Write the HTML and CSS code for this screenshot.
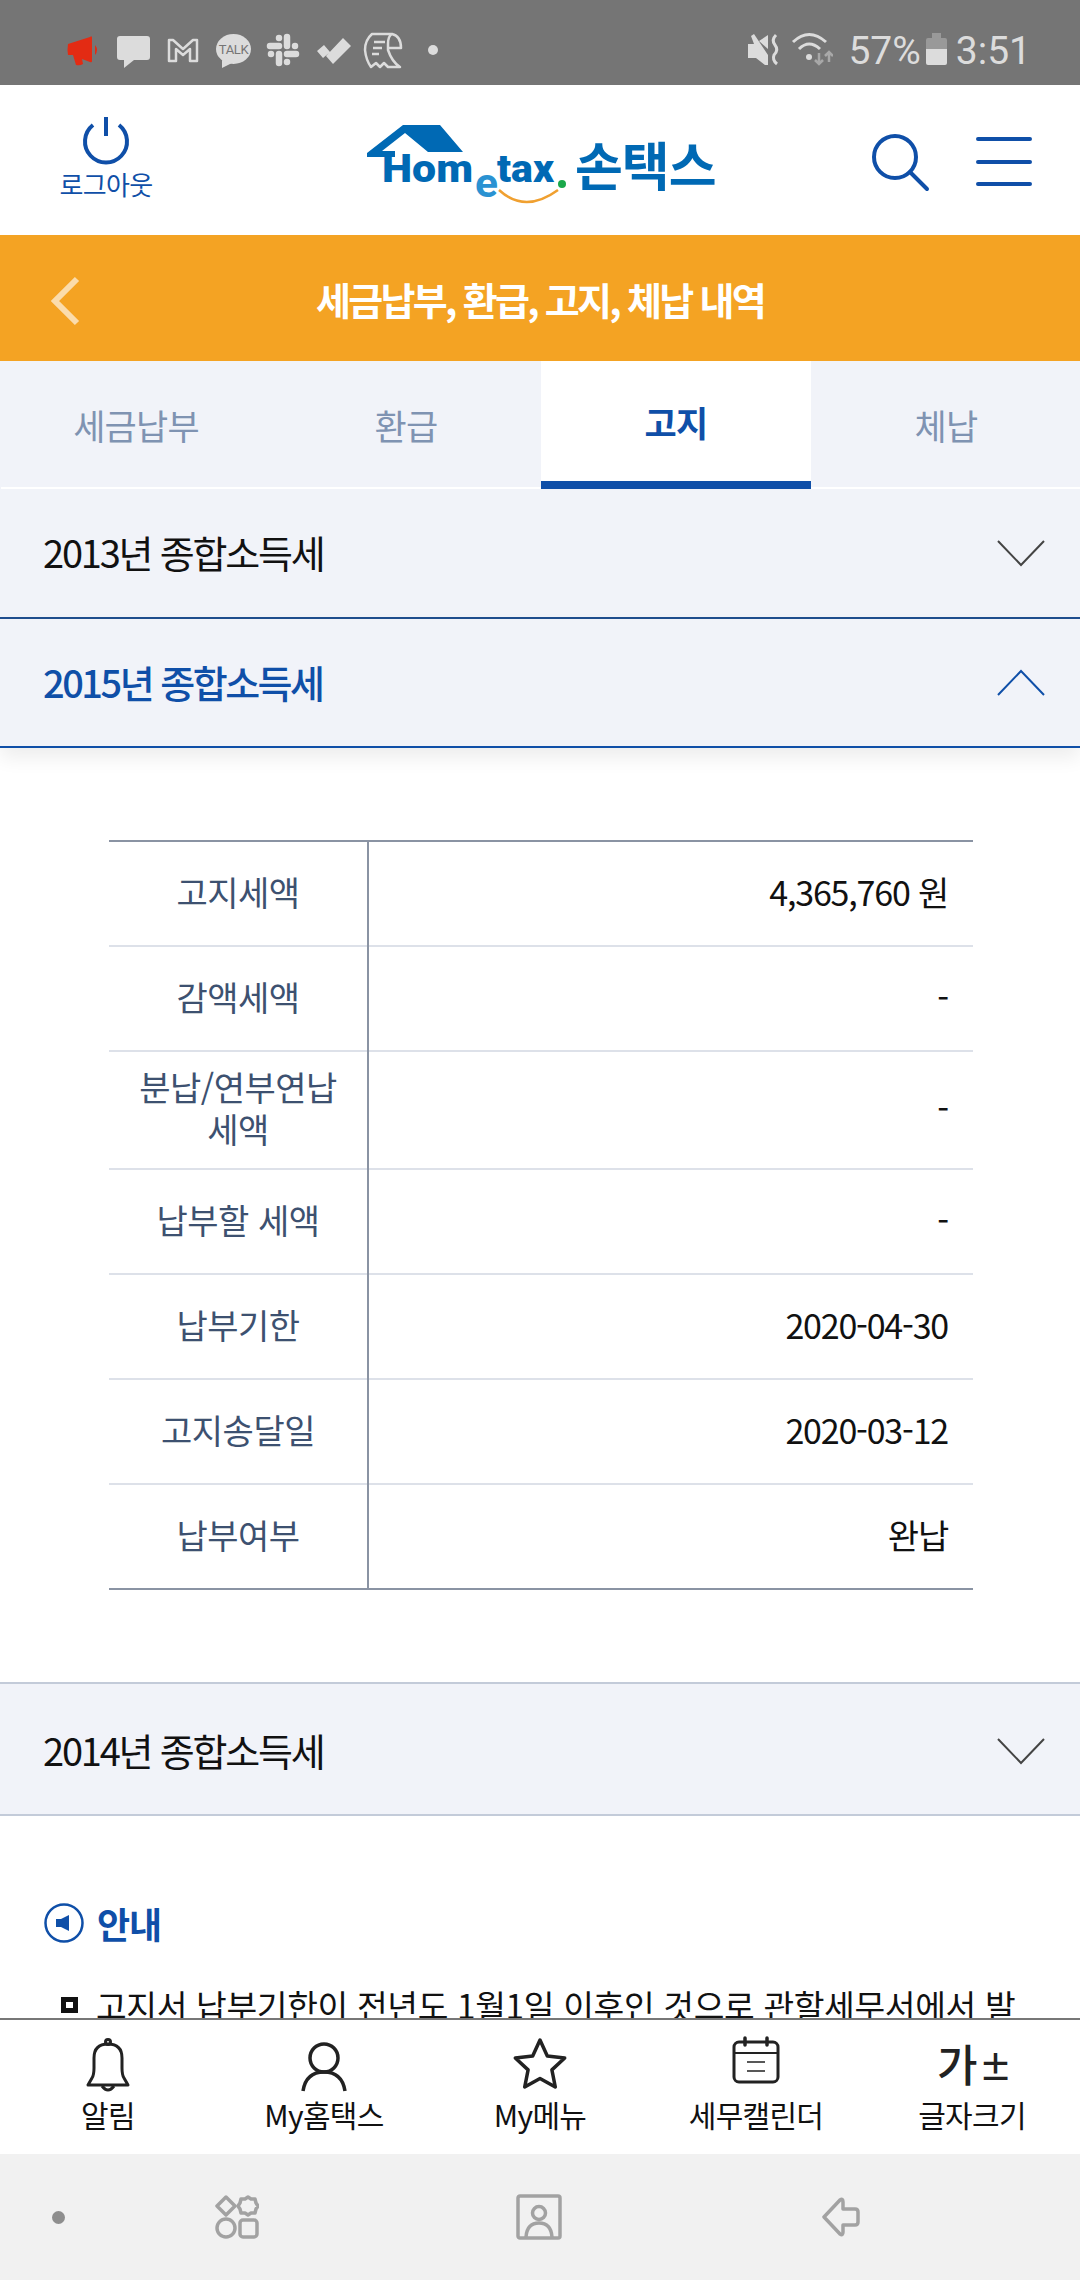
FILE: index.html
```html
<!DOCTYPE html>
<html lang="ko">
<head>
<meta charset="utf-8">
<title>세금납부, 환급, 고지, 체납 내역</title>
<link rel="stylesheet" href="styles.css">
</head>
<body>
<div class="status">
  <svg class="status-left" width="400" height="85" viewBox="60 0 400 85">
    <path fill="#e32b13" d="M68 44L90 37Q92 35 92 38V61Q92 63 90 62L82 59L83 64Q80 66 76 65L73 55H68Q67 50 68 44ZM95 45Q99 50 95 55Z"/>
    <path fill="#dcdcdc" d="M120 36H147Q150 36 150 39V57Q150 60 147 60H134L124 68V60H120Q117 60 117 57V39Q117 36 120 36Z"/>
    <path fill="none" stroke="#dcdcdc" stroke-width="2.5" stroke-linejoin="round" d="M169 40H173L183 49L193 40H197V61H190V49L183 55L176 49V61H169Z"/>
    <ellipse fill="#dcdcdc" cx="233.5" cy="49" rx="17.5" ry="15"/>
    <path fill="#dcdcdc" d="M222 60V68L232 63Z"/>
    <text class="talk" x="233.5" y="54" text-anchor="middle">TALK</text>
    <g fill="none" stroke="#dcdcdc" stroke-width="6.5" stroke-linecap="round">
      <path d="M270 46H279M287 37V46M287 54H296M279 54V63"/>
      <path d="M279 38V38M295 46V46M287 62V62M271 54V54"/>
    </g>
    <path fill="#dcdcdc" d="M317 51L324 45L330 52L323 58ZM326 56L343 38L351 46L333 64Z"/>
    <path fill="none" stroke="#dcdcdc" stroke-width="2.5" stroke-linejoin="round" d="M372 34Q365 40 365 50Q366 60 371 67L376 63L380 67L384 63L388 67H400Q392 62 388 50V44Q388 36 392 34H372ZM392 34Q401 36 401 48H388M374 42H385M373 48H382M372 54H379"/>
    <circle fill="#dcdcdc" cx="433" cy="50" r="5"/>
  </svg>
  <div class="status-right">
    <svg width="85" height="85" viewBox="749 0 85 85">
      <path fill="#dcdcdc" d="M752 36L755 34L769 55V65H766L757 58H749V44H755ZM760 41L769 35V49Z"/>
      <path fill="none" stroke="#dcdcdc" stroke-width="3" d="M777 35Q772 40 776 45Q780 50 775 55Q773 60 778 64"/>
      <path fill="none" stroke="#dcdcdc" stroke-width="3" d="M794 42Q810 27 827 42M800 49Q810 39 821 49"/>
      <circle fill="#dcdcdc" cx="810" cy="57" r="3"/>
      <path fill="none" stroke="#a8a8a8" stroke-width="2.5" d="M820 53V64M816 60L820 64L824 60M830 62V52M826 56L830 52L834 56"/>
    </svg>
    <span class="pct">57%</span>
    <svg width="21" height="85" viewBox="926 0 21 85">
      <path fill="#999" d="M932 33H941V38H945Q947 38 947 40V49H926V40Q926 38 928 38H932Z"/>
      <path fill="#dcdcdc" d="M926 49H947V63Q947 65 945 65H928Q926 65 926 63Z"/>
    </svg>
    <span class="time">3:51</span>
  </div>
</div>

<div class="header">
  <div class="logout">
    <svg width="50" height="50" viewBox="81 117 50 50">
      <path fill="none" stroke="#0f4fa8" stroke-width="4" d="M93 125A21 21 0 1 0 119 125"/>
      <path fill="none" stroke="#0f4fa8" stroke-width="4" d="M106 117V136"/>
    </svg>
    <span>로그아웃</span>
  </div>
  <svg class="logo" width="360" height="95" viewBox="360 115 360 95">
    <path fill="#0069b4" d="M367 153L403 125H440L463 152H428L405 133L382 151H395V157H367Z"/>
    <text class="logo-en" x="382" y="182" textLength="91" lengthAdjust="spacingAndGlyphs">Hom</text>
    <text class="logo-e" x="475" y="197" textLength="23" lengthAdjust="spacingAndGlyphs">e</text>
    <text class="logo-en" x="497" y="182" textLength="57" lengthAdjust="spacingAndGlyphs">tax</text>
    <circle fill="#1aa84a" cx="562" cy="184" r="4"/>
    <path fill="none" stroke="#f0a030" stroke-width="2.5" d="M499 190Q525 214 558 190"/>
    <text class="logo-ko" x="575" y="186">손택스</text>
  </svg>
  <div class="header-btns">
    <svg width="60" height="60" viewBox="870 133 60 60">
      <circle fill="none" stroke="#0f4fa8" stroke-width="4" cx="895" cy="157" r="21"/>
      <path fill="none" stroke="#0f4fa8" stroke-width="4" stroke-linecap="round" d="M910 172L927 189"/>
    </svg>
    <svg width="56" height="50" viewBox="976 137 56 50">
      <path fill="none" stroke="#0f4fa8" stroke-width="4" stroke-linecap="round" d="M978 139H1030M978 162H1030M978 184H1030"/>
    </svg>
  </div>
</div>

<div class="titlebar">
  <svg class="back" width="30" height="50" viewBox="0 0 30 50">
    <path fill="none" stroke="#fbdcab" stroke-width="6" d="M27 3L5 25L27 47"/>
  </svg>
  <h1>세금납부, 환급, 고지, 체납 내역</h1>
</div>

<div class="tabs">
  <div class="tab">세금납부</div>
  <div class="tab">환급</div>
  <div class="tab on">고지</div>
  <div class="tab">체납</div>
</div>

<div class="content">
  <div class="acc acc1">
    <span>2013년 종합소득세</span>
    <svg width="50" height="28" viewBox="0 0 50 28"><path fill="none" stroke="#444" stroke-width="2" d="M2 2L25 26L48 2"/></svg>
  </div>
  <div class="acc acc2">
    <span>2015년 종합소득세</span>
    <svg width="50" height="28" viewBox="0 0 50 28"><path fill="none" stroke="#0f4fa8" stroke-width="2" d="M2 26L25 2L48 26"/></svg>
  </div>

  <table class="info">
    <tr><th>고지세액</th><td>4,365,760 원</td></tr>
    <tr><th>감액세액</th><td>-</td></tr>
    <tr class="tall"><th>분납/연부연납<br>세액</th><td>-</td></tr>
    <tr><th>납부할 세액</th><td>-</td></tr>
    <tr><th>납부기한</th><td>2020-04-30</td></tr>
    <tr><th>고지송달일</th><td>2020-03-12</td></tr>
    <tr><th>납부여부</th><td>완납</td></tr>
  </table>

  <div class="acc acc3">
    <span>2014년 종합소득세</span>
    <svg width="50" height="28" viewBox="0 0 50 28"><path fill="none" stroke="#444" stroke-width="2" d="M2 2L25 26L48 2"/></svg>
  </div>

  <div class="notice">
    <svg width="40" height="40" viewBox="0 0 40 40">
      <circle fill="none" stroke="#0f4fa8" stroke-width="2.5" cx="20" cy="20" r="18.5"/>
      <path fill="#0f4fa8" d="M12 16H17L25 12V28L17 24H12Z"/>
    </svg>
    <span>안내</span>
  </div>
  <div class="note-item"><i></i>고지서 납부기한이 전년도 1월1일 이후인 것으로 관할세무서에서 발</div>
</div>

<div class="nav">
  <div class="nav-item">
    <svg width="80" height="76" viewBox="0 0 80 76">
      <g fill="none" stroke="#222" stroke-width="3" stroke-linejoin="round">
        <path d="M20 65L24 58Q26 55 26 48V38Q26 24 40 24Q54 24 54 38V48Q54 55 56 58L60 65Z"/>
        <circle cx="40" cy="22" r="2.5"/>
        <path d="M34 66Q40 74 46 66"/>
      </g>
    </svg>
    <span>알림</span>
  </div>
  <div class="nav-item">
    <svg width="80" height="76" viewBox="0 0 80 76">
      <g fill="none" stroke="#222" stroke-width="3.5">
        <circle cx="40" cy="38" r="14"/>
        <path d="M19 71Q22 52 40 52Q58 52 61 71"/>
      </g>
    </svg>
    <span>My홈택스</span>
  </div>
  <div class="nav-item">
    <svg width="80" height="76" viewBox="0 0 80 76">
      <path fill="none" stroke="#222" stroke-width="3.5" stroke-linejoin="round" d="M40 20L47.300 35.900L64.700 38L51.900 49.900L55.300 67L40 58.500L24.700 67L28.100 49.900L15.300 38L32.700 35.900Z"/>
    </svg>
    <span>My메뉴</span>
  </div>
  <div class="nav-item">
    <svg width="80" height="76" viewBox="0 0 80 76">
      <g fill="none" stroke="#222">
        <rect x="18" y="22" width="44" height="40" rx="5" stroke-width="3"/>
        <path stroke-width="2" d="M18 33H62"/>
        <path stroke-width="3.500" stroke-linecap="round" d="M29 18V25M51 18V25"/>
        <path stroke-width="1.500" d="M31 42H49M31 51H49"/>
      </g>
    </svg>
    <span>세무캘린더</span>
  </div>
  <div class="nav-item">
    <svg width="80" height="76" viewBox="0 0 80 76">
      <text class="size-ga" x="5" y="62">가</text>
      <text class="size-pm" x="47" y="60">±</text>
    </svg>
    <span>글자크기</span>
  </div>
</div>

<div class="sysbar">
  <svg class="sys-dot" width="13" height="13" viewBox="0 0 13 13"><circle fill="#8e8e8e" cx="6.500" cy="6.500" r="6.500"/></svg>
  <svg class="sys-recent" width="44" height="44" viewBox="0 0 44 44">
    <g fill="none" stroke="#a2a2a2" stroke-width="3.500" stroke-linejoin="round">
      <path d="M2 11L11 2L20 11L11 20Z"/>
      <path d="M33 2L36 4L40 4L41 8L43 11L41 14L40 18L36 18L33 20L30 18L26 18L25 14L23 11L25 8L26 4L30 4Z"/>
      <circle cx="11" cy="33" r="9"/>
      <rect x="25" y="25" width="17" height="17" rx="3"/>
    </g>
  </svg>
  <svg class="sys-home" width="46" height="46" viewBox="0 0 46 46">
    <g fill="none" stroke="#a2a2a2" stroke-width="3.500">
      <rect x="2" y="2" width="42" height="42" rx="2"/>
      <circle cx="23" cy="19" r="6.500"/>
      <path d="M10 43Q11 29 23 29Q35 29 36 43"/>
    </g>
  </svg>
  <svg class="sys-back" width="38" height="40" viewBox="0 0 38 40">
    <path fill="none" stroke="#a2a2a2" stroke-width="3.500" stroke-linejoin="round" d="M2 20L18 3Q21 1 21 5V12H33Q36 12 36 15V25Q36 28 33 28H21V35Q21 39 18 37Z"/>
  </svg>
</div>
</body>
</html>
```

FILE: styles.css
```css
* { box-sizing: border-box; }

html, body {
  margin: 0;
  padding: 0;
}

body {
  width: 1080px;
  height: 2280px;
  display: flex;
  flex-direction: column;
  overflow: hidden;
  background: #fff;
  color: #111;
  font-family: "Noto Sans CJK KR", "Noto Sans", sans-serif;
}

svg { display: block; flex: none; }

/* status bar */
.status {
  height: 85px;
  flex: none;
  display: flex;
  justify-content: space-between;
  background: #757575;
  padding-left: 60px;
  padding-right: 49px;
}
.status-right {
  display: flex;
  align-items: center;
  color: #dcdcdc;
  font-family: Roboto, sans-serif;
  font-size: 39px;
}
.status-right span { padding-top: 17px; }
.pct { margin-left: 15px; margin-right: 5px; }
.time { margin-left: 9px; }
.talk {
  font-family: Roboto, sans-serif;
  font-size: 13px;
  letter-spacing: -.4px;
  fill: #757575;
}

/* header */
.header {
  height: 150px;
  flex: none;
  display: flex;
  background: #fff;
}
.logout {
  width: 212px;
  padding-top: 32px;
  display: flex;
  flex-direction: column;
  align-items: center;
  color: #0f4fa8;
  font-size: 26px;
  line-height: 30px;
  letter-spacing: -.7px;
}
.logout span { margin-top: 2px; }
.logo { margin-left: 148px; margin-top: 30px; }
.logo-en {
  font-family: Roboto, sans-serif;
  font-weight: 900;
  font-size: 38px;
  fill: #0069b4;
}
.logo-e {
  font-family: Roboto, sans-serif;
  font-weight: 700;
  font-size: 40px;
  fill: #2a92d2;
}
.logo-ko {
  font-weight: 700;
  font-size: 52px;
  letter-spacing: -1px;
  fill: #0069b4;
}
.header-btns {
  margin-left: auto;
  padding-right: 48px;
  padding-top: 48px;
  display: flex;
  gap: 46px;
  align-items: flex-start;
}
.header-btns svg + svg { margin-top: 4px; }

/* orange title */
.titlebar {
  height: 126px;
  flex: none;
  position: relative;
  display: flex;
  align-items: center;
  justify-content: center;
  background: #f4a323;
}
.titlebar h1 {
  margin: 0;
  color: #fff;
  font-size: 38px;
  font-weight: 700;
  letter-spacing: -2.7px;
}
.back {
  position: absolute;
  left: 50px;
  top: 41px;
}

/* tabs */
.tabs {
  height: 128px;
  flex: none;
  display: flex;
  background: #f1f3f9;
  padding-left: 1px;
}
.tab {
  width: 270px;
  flex: none;
  display: flex;
  align-items: center;
  justify-content: center;
  border-bottom: 2px solid #fff;
  color: #7f93b2;
  font-size: 35px;
  letter-spacing: -.8px;
}
.tab.on {
  background: #fff;
  border-bottom: 8px solid #0f4fa8;
  color: #0f4fa8;
  font-weight: 700;
}

/* body */
.content {
  flex: 1;
  min-height: 0;
  overflow: hidden;
}
.acc {
  display: flex;
  align-items: center;
  justify-content: space-between;
  padding: 0 34px 0 43px;
  background: #f1f3f9;
  font-size: 38px;
  letter-spacing: -2.2px;
  color: #111;
}
.acc span { padding-bottom: 3px; }
.acc1 {
  height: 130px;
  border-bottom: 2px solid #1f4e8f;
}
.acc2 {
  height: 129px;
  border-bottom: 2px solid #0f4fa8;
  color: #0f4fa8;
  font-weight: 500;
  letter-spacing: -2.5px;
  box-shadow: 0 10px 18px rgba(0, 0, 0, .07);
  position: relative;
}
.acc3 {
  height: 134px;
  margin-top: 92px;
  padding-top: 4px;
  border-top: 2px solid #c3cbd9;
  border-bottom: 2px solid #c3cbd9;
}

.info {
  width: 864px;
  margin: 92px 0 0 109px;
  border-collapse: collapse;
  table-layout: fixed;
  border-top: 2px solid #8a93a3;
  border-bottom: 2px solid #8a93a3;
  font-size: 34px;
}
.info tr { height: 105px; }
.info tr.tall { height: 118px; }
.info th, .info td {
  padding: 0 0 4px;
  border-top: 2px solid #dde1e9;
  line-height: 42px;
}
.info tr:first-child th, .info tr:first-child td { border-top: 0; }
.info th {
  width: 259px;
  border-right: 2px solid #8a93a3;
  color: #3d5170;
  font-weight: 400;
  letter-spacing: -.5px;
}
.info td {
  text-align: right;
  padding-right: 25px;
  color: #111;
  letter-spacing: -1.2px;
}

.notice {
  margin: 87px 0 0 44px;
  display: flex;
  align-items: center;
  gap: 13px;
  color: #0f4fa8;
  font-size: 36px;
  font-weight: 700;
  letter-spacing: -1px;
  line-height: 40px;
}
.note-item {
  display: flex;
  align-items: center;
  margin: 38px 0 0 61px;
  font-size: 33.400px;
  line-height: 48px;
  white-space: nowrap;
  color: #111;
  letter-spacing: -.35px;
}
.note-item i {
  width: 17px;
  height: 16px;
  border: 5px solid #111;
  margin-right: 18px;
  flex: none;
}

/* bottom menu */
.nav {
  height: 136px;
  flex: none;
  display: flex;
  background: #fff;
  border-top: 2px solid #777;
}
.nav-item {
  width: 216px;
  display: flex;
  flex-direction: column;
  align-items: center;
  font-size: 30px;
  line-height: 36px;
  letter-spacing: -.7px;
  color: #111;
}
.size-ga {
  font-size: 44px;
  font-weight: 500;
  fill: #222;
}
.size-pm {
  font-size: 33px;
  font-weight: 700;
  fill: #222;
}

/* android buttons */
.sysbar {
  height: 126px;
  flex: none;
  display: flex;
  align-items: center;
  background: #f1f1f1;
  padding-left: 52px;
}
.sys-recent { margin-left: 150px; }
.sys-home { margin-left: 257px; }
.sys-back { margin-left: 260px; }
```
